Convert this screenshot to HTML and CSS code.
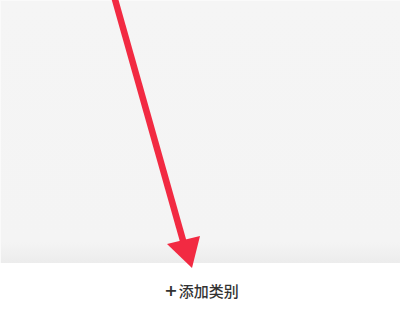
FILE: index.html
```html
<!DOCTYPE html>
<html>
<head>
  <meta charset="UTF-8">
  <title>添加类别</title>
  <link rel="stylesheet" href="styles.css">
</head>
<body>
  <div class="screen">
    <div class="content"></div>
    <div class="bottom-bar">
      <button class="add-btn"><span class="plus">+</span>添加类别</button>
    </div>

    <svg class="arrow" width="400" height="321" viewBox="0 0 400 321">
      <line x1="114" y1="-4" x2="184" y2="244" stroke="#f22a42" stroke-width="6.5" />
      <polygon points="167,244 200,236 192,268" fill="#f22a42" />
    </svg>
  </div>
</body>
</html>
```

FILE: styles.css
```css
html, body {
  margin: 0;
  padding: 0;
  width: 400px;
  height: 321px;
  overflow: hidden;
  font-family: "Noto Sans CJK SC", "Noto Sans", sans-serif;
}

.screen {
  position: relative;
  display: flex;
  flex-direction: column;
  height: 100%;
}

.content {
  flex-grow: 1;
  background: linear-gradient(to bottom, #f5f5f5 0%, #f4f4f4 92%, #ececec 100%);
  border-top: 1px solid #fafafa;
  border-left: 1px solid #fafafa;
}

.bottom-bar {
  height: 58px;
  background-color: #fff;
  display: flex;
  align-items: center;
  justify-content: center;
  padding-bottom: 3px;
  box-sizing: border-box;
}

.add-btn {
  background: none;
  border: none;
  padding: 0;
  margin-left: 3px;
  font-family: inherit;
  font-size: 15px;
  font-weight: 500;
  color: #333;
  display: flex;
  align-items: center;
}

.plus {
  font-family: "DejaVu Sans", sans-serif;
  font-size: 16px;
  font-weight: bold;
  margin-right: 1px;
}

/* arrow overlay drawn on top of the page */
.arrow {
  position: absolute;
  top: 0;
  left: 0;
  pointer-events: none;
}
```
